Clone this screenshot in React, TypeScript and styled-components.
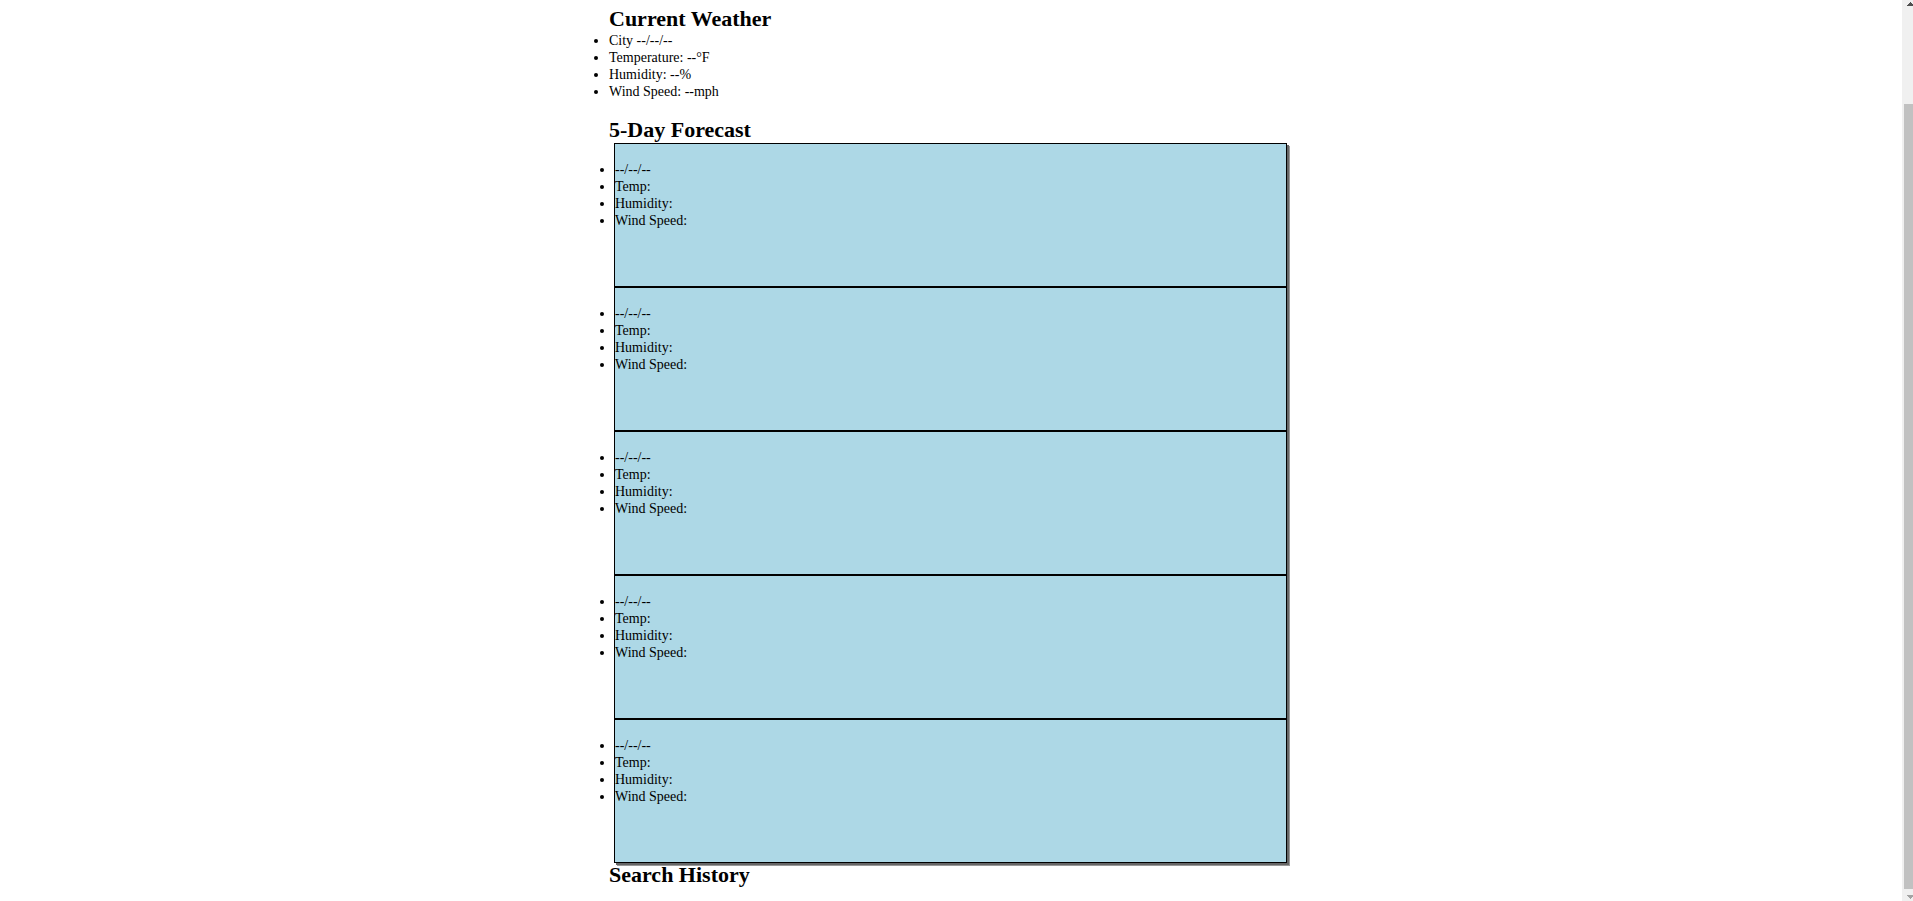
import React from "react";
import styled, { createGlobalStyle } from "styled-components";

const GlobalStyle = createGlobalStyle`
  * {
    box-sizing: border-box;
    margin: 0;
    padding: 0;
  }
  body {
    background: #ffffff;
    color: #000000;
    font-family: "Liberation Serif", "Times New Roman", serif;
    font-size: 14px;
    line-height: 17px;
    overflow: hidden;
  }
`;

const Page = styled.div`
  display: flex;
  height: 100vh;
  overflow: hidden;
`;

const Content = styled.main`
  flex: 1;
  min-width: 0;
  padding-top: 7px;
`;

const Column = styled.div`
  width: 100%;
  max-width: 684px;
  margin: 0 auto;
`;

const Heading = styled.h2`
  margin-bottom: 1px;
  font-size: 22px;
  line-height: 24px;
`;

const Section = styled.section<{ $spaced?: boolean }>`
  margin-bottom: ${(p) => (p.$spaced ? "18px" : "0")};
`;

const Cards = styled.div`
  display: flex;
  flex-direction: column;
  padding: 0 6px 0 5px;
`;

const Card = styled.article`
  height: 144px;
  padding-top: 17px;
  border: 1px solid #000000;
  background: lightblue;
  box-shadow: 2px 2px 0 #666666, 3px 3px 0 #999999;
`;

const List = styled.ul`
  list-style: disc outside;
`;

const Scrollbar = styled.div`
  display: flex;
  flex-direction: column;
  flex: 0 0 11px;
  padding-left: 2px;
  background: #f0f0f0;
`;

const Arrow = styled.svg`
  display: block;
  flex: none;
  width: 9px;
  height: 12px;
`;

const Track = styled.div`
  display: flex;
  flex-direction: column;
  flex: 1;
  padding-top: 92px;
`;

const Thumb = styled.div`
  flex: 1;
  background: #c1c1c1;
`;

const days = [1, 2, 3, 4, 5];

export default function App() {
  return (
    <Page>
      <GlobalStyle />
      <Content>
        <Column>
          <Section $spaced>
            <Heading>Current Weather</Heading>
            <List>
              <li>City --/--/--</li>
              <li>Temperature: --°F</li>
              <li>Humidity: --%</li>
              <li>Wind Speed: --mph</li>
            </List>
          </Section>
          <Section>
            <Heading>5-Day Forecast</Heading>
            <Cards>
              {days.map((day) => (
                <Card key={day}>
                  <List>
                    <li>--/--/--</li>
                    <li>Temp:</li>
                    <li>Humidity:</li>
                    <li>Wind Speed:</li>
                  </List>
                </Card>
              ))}
            </Cards>
          </Section>
          <Section>
            <Heading>Search History</Heading>
          </Section>
        </Column>
      </Content>
      <Scrollbar aria-hidden="true">
        <Arrow viewBox="0 0 9 12" shapeRendering="crispEdges">
          <path d="M6 2h1v1h1v1h1v2H3V5h1V4h1V3h1z" fill="#505050" />
        </Arrow>
        <Track>
          <Thumb />
        </Track>
        <Arrow viewBox="0 0 9 12" shapeRendering="crispEdges">
          <path d="M3 6h6v2H8v1H7v1H6V9H5V8H4V7H3z" fill="#a3a3a3" />
        </Arrow>
      </Scrollbar>
    </Page>
  );
}
